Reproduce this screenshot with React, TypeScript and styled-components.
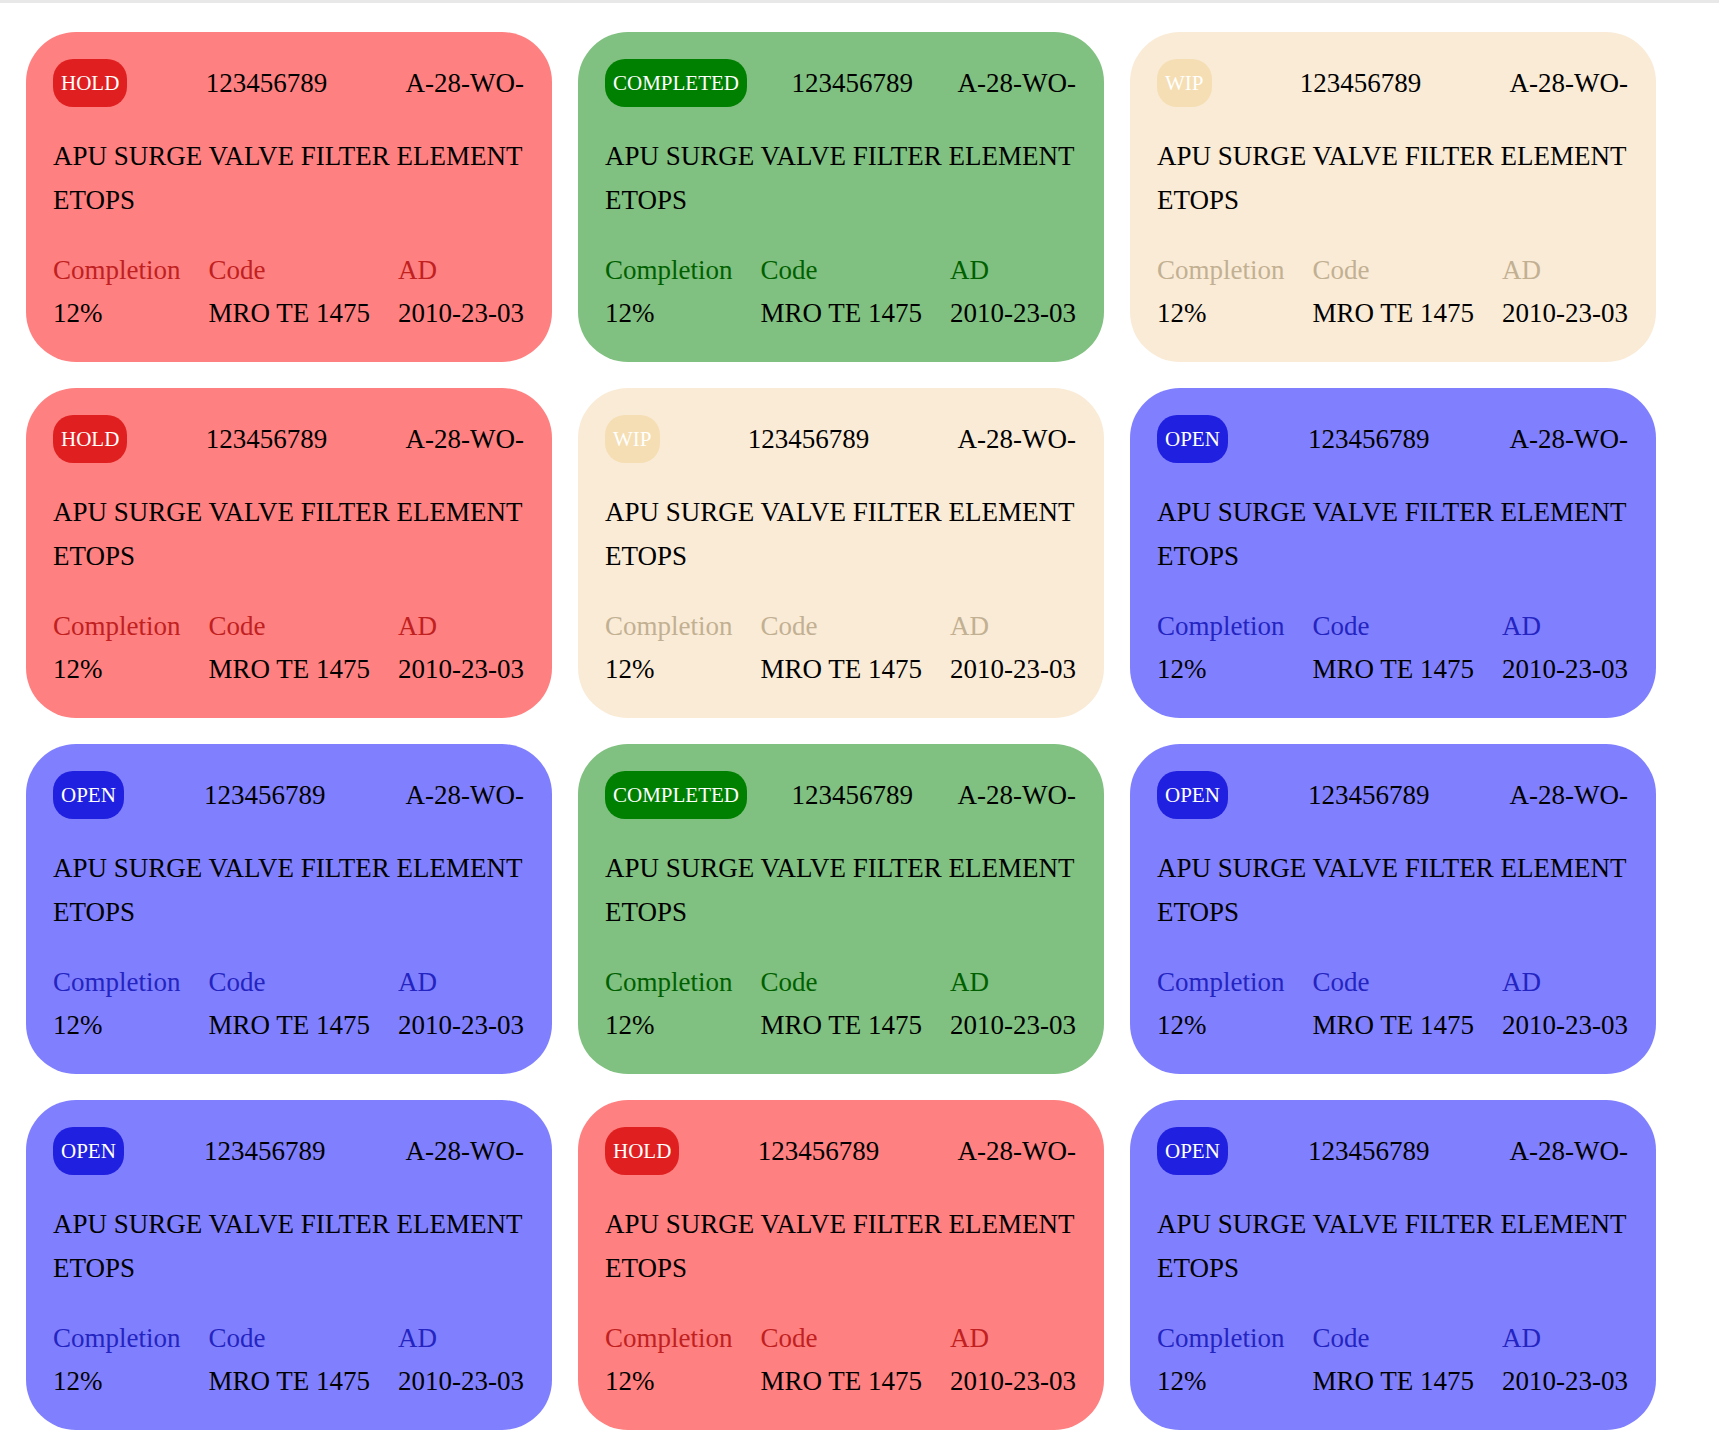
import React from "react";
import styled, { createGlobalStyle } from "styled-components";

type Status = "HOLD" | "COMPLETED" | "WIP" | "OPEN";

const palette: Record<Status, { card: string; badge: string; label: string }> = {
  HOLD: { card: "#ff8080", badge: "#e02020", label: "#c02020" },
  COMPLETED: { card: "#80c080", badge: "#008000", label: "#006000" },
  WIP: { card: "#faebd7", badge: "#f5deb3", label: "#c2b092" },
  OPEN: { card: "#8080ff", badge: "#2020e0", label: "#2424c0" },
};

const Global = createGlobalStyle`
  html, body {
    margin: 0;
    padding: 0;
    background: #ffffff;
  }
  body {
    font-family: "Liberation Serif", "Times New Roman", serif;
    color: #000;
  }
`;

const Page = styled.div`
  border-top: 3px solid #e8e8e8;
  padding: 29px 0 26px 26px;
`;

const Grid = styled.div`
  display: grid;
  grid-template-columns: repeat(3, 526px);
  column-gap: 26px;
  row-gap: 26px;
`;

const Card = styled.div<{ $status: Status }>`
  background: ${(p) => palette[p.$status].card};
  border-radius: 50px;
  padding: 27px 28px 27px 27px;
  height: 330px;
  box-sizing: border-box;
  display: flex;
  flex-direction: column;
  font-size: 27px;
`;

const Header = styled.div`
  display: flex;
  align-items: center;
  justify-content: space-between;
  height: 48px;
`;

const Badge = styled.span<{ $status: Status }>`
  background: ${(p) => palette[p.$status].badge};
  color: #fff;
  font-size: 21px;
  line-height: 24px;
  padding: 12px 8px;
  border-radius: 20px;
`;

const HeaderText = styled.span`
  line-height: 48px;
`;

const Description = styled.div`
  margin-top: 27px;
  line-height: 44px;
`;

const Footer = styled.div`
  margin-top: 27px;
  display: flex;
  justify-content: space-between;
`;

const Column = styled.div`
  display: flex;
  flex-direction: column;
`;

const Label = styled.span<{ $status: Status }>`
  color: ${(p) => palette[p.$status].label};
  line-height: 43px;
`;

const Value = styled.span`
  line-height: 43px;
`;

const statuses: Status[] = [
  "HOLD",
  "COMPLETED",
  "WIP",
  "HOLD",
  "WIP",
  "OPEN",
  "OPEN",
  "COMPLETED",
  "OPEN",
  "OPEN",
  "HOLD",
  "OPEN",
];

const WorkCard: React.FC<{ status: Status }> = ({ status }) => (
  <Card $status={status}>
    <Header>
      <Badge $status={status}>{status}</Badge>
      <HeaderText>123456789</HeaderText>
      <HeaderText>A-28-WO-</HeaderText>
    </Header>
    <Description>APU SURGE VALVE FILTER ELEMENT ETOPS</Description>
    <Footer>
      <Column>
        <Label $status={status}>Completion</Label>
        <Value>12%</Value>
      </Column>
      <Column>
        <Label $status={status}>Code</Label>
        <Value>MRO TE 1475</Value>
      </Column>
      <Column>
        <Label $status={status}>AD</Label>
        <Value>2010-23-03</Value>
      </Column>
    </Footer>
  </Card>
);

export default function App() {
  return (
    <>
      <Global />
      <Page>
        <Grid>
          {statuses.map((s, i) => (
            <WorkCard key={i} status={s} />
          ))}
        </Grid>
      </Page>
    </>
  );
}
